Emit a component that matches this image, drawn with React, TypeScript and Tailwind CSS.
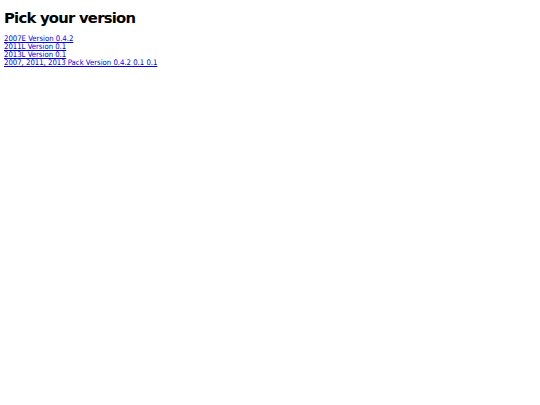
export default function App() {
  const links = [
    '2007E Version 0.4.2',
    '2011L Version 0.1',
    '2013L Version 0.1',
    '2007, 2011, 2013 Pack Version 0.4.2 0.1 0.1',
  ]

  return (
    <div className="min-h-screen bg-white px-[4px] text-black">
      <h1
        className="pt-[9px] pb-[8px] text-[14.8px] leading-[18px] font-bold tracking-[-0.75px]"
        style={{ fontFamily: '"DejaVu Sans", sans-serif' }}
      >
        Pick your version
      </h1>
      <div
        className="flex flex-col items-start text-[7.7px] leading-[8px]"
        style={{ fontFamily: '"DejaVu Sans Condensed", "DejaVu Sans", sans-serif' }}
      >
        {links.map((l) => (
          <a key={l} href="#" className="text-[#0000ee] underline">
            {l}
          </a>
        ))}
      </div>
    </div>
  )
}
